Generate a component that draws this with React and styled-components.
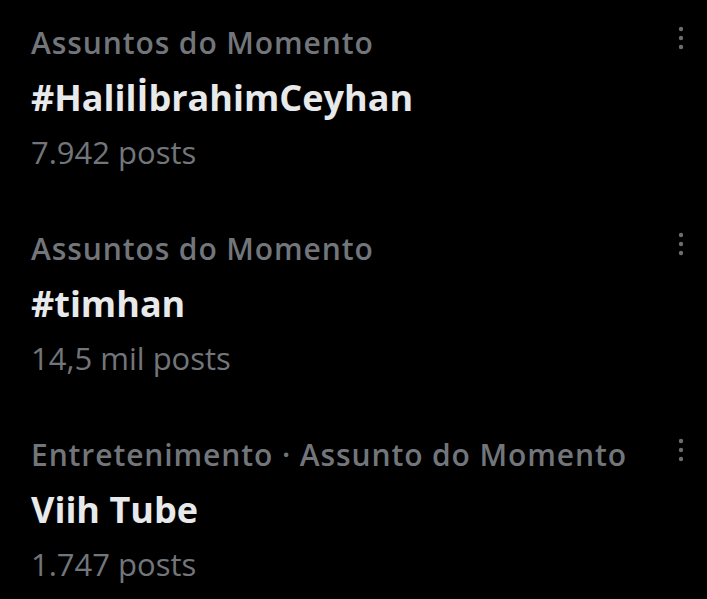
import React from 'react';
import styled, { createGlobalStyle } from 'styled-components';

const GlobalStyle = createGlobalStyle`
  html, body {
    margin: 0;
    padding: 0;
    background: #000;
  }
  body {
    font-family: "Open Sans", "Liberation Sans", sans-serif;
  }
`;

const List = styled.div`
  width: 707px;
  height: 599px;
  background: #000;
  padding: 21px 0 0 31px;
  box-sizing: border-box;
  display: flex;
  flex-direction: column;
  gap: 52px;
  overflow: hidden;
`;

const Trend = styled.div`
  display: grid;
  grid-template-columns: 1fr 52px;
`;

const Info = styled.div`
  display: flex;
  flex-direction: column;
  white-space: nowrap;
`;

const Category = styled.span`
  color: #72767b;
  font-size: 30px;
  font-weight: 600;
  line-height: 44px;
  letter-spacing: 0.9px;
`;

const Title = styled.span`
  color: #e7e9ea;
  font-size: 36px;
  font-weight: 700;
  line-height: 65px;
`;

const Count = styled.span`
  color: #72767b;
  font-size: 31px;
  font-weight: 400;
  line-height: 45px;
`;

const More = styled.div`
  display: flex;
  justify-content: center;
  align-items: flex-start;
  padding-top: 4px;
`;

const Dots = () => (
  <svg width="8" height="26" viewBox="0 0 8 26">
    <circle cx="4" cy="4" r="2.2" fill="#6b6e71" />
    <circle cx="4" cy="13" r="2.2" fill="#6b6e71" />
    <circle cx="4" cy="22" r="2.2" fill="#6b6e71" />
  </svg>
);

const trends = [
  { category: 'Assuntos do Momento', title: '#HalilİbrahimCeyhan', count: '7.942 posts' },
  { category: 'Assuntos do Momento', title: '#timhan', count: '14,5 mil posts' },
  { category: 'Entretenimento · Assunto do Momento', title: 'Viih Tube', count: '1.747 posts' },
];

export default function App() {
  return (
    <>
      <GlobalStyle />
      <List>
        {trends.map((t, i) => (
          <Trend key={i}>
            <Info>
              <Category>{t.category}</Category>
              <Title>{t.title}</Title>
              <Count>{t.count}</Count>
            </Info>
            <More>
              <Dots />
            </More>
          </Trend>
        ))}
      </List>
    </>
  );
}
